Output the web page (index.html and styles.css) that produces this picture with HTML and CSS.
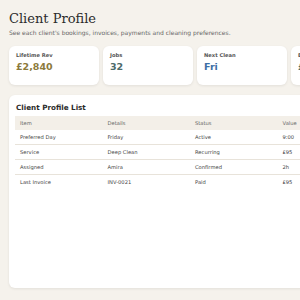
FILE: index.html
```html
<!DOCTYPE html>
<html lang="en">
<head>
    <meta charset="UTF-8">
    <meta name="viewport" content="width=device-width, initial-scale=1.0">
    <title>Client Profile</title>
    <link rel="stylesheet" href="styles.css">
</head>
<body>
    <div class="page">
        <header class="page-header">
            <h1>Client Profile</h1>
            <p class="subtitle">See each client's bookings, invoices, payments and cleaning preferences.</p>
        </header>

        <section class="stats">
            <div class="stat-card">
                <div class="stat-label">Lifetime Rev</div>
                <div class="stat-value gold">£2,840</div>
            </div>
            <div class="stat-card">
                <div class="stat-label">Jobs</div>
                <div class="stat-value slate">32</div>
            </div>
            <div class="stat-card">
                <div class="stat-label">Next Clean</div>
                <div class="stat-value blue">Fri</div>
            </div>
            <div class="stat-card">
                <div class="stat-label">Balance</div>
                <div class="stat-value slate">£0</div>
            </div>
        </section>

        <section class="panel">
            <h2>Client Profile List</h2>
            <table class="data-table">
                <thead>
                    <tr>
                        <th>Item</th>
                        <th>Details</th>
                        <th>Status</th>
                        <th>Value</th>
                    </tr>
                </thead>
                <tbody>
                    <tr>
                        <td>Preferred Day</td>
                        <td>Friday</td>
                        <td>Active</td>
                        <td>9:00</td>
                    </tr>
                    <tr>
                        <td>Service</td>
                        <td>Deep Clean</td>
                        <td>Recurring</td>
                        <td>£95</td>
                    </tr>
                    <tr>
                        <td>Assigned</td>
                        <td>Amira</td>
                        <td>Confirmed</td>
                        <td>2h</td>
                    </tr>
                    <tr>
                        <td>Last Invoice</td>
                        <td>INV-0021</td>
                        <td>Paid</td>
                        <td>£95</td>
                    </tr>
                </tbody>
            </table>
        </section>
    </div>
</body>
</html>
```

FILE: styles.css
```css
:root {
    --background: #f5f2ec;
    --card: #ffffff;
    --text: #2b2b2b;
    --muted: #666666;
    --border: #e8e3da;
    --header-bg: #f3efe8;
    --gold: #8c7a3c;
    --slate: #4d6b6b;
    --blue: #3d6fa6;
}

html, body {
    margin: 0;
    padding: 0;
    background-color: var(--background);
    color: var(--text);
    font-family: "DejaVu Sans", Verdana, sans-serif;
    overflow: hidden;
}

.page {
    width: 376px;
    padding: 10px 9px;
}

.page-header h1 {
    margin: 0;
    font-family: "DejaVu Serif", Georgia, serif;
    font-weight: normal;
    font-size: 13px;
    line-height: 18px;
}

.subtitle {
    margin: 1px 0 0;
    font-size: 6px;
    color: var(--muted);
}

.stats {
    display: grid;
    grid-template-columns: repeat(4, 90px);
    gap: 4px;
    margin-top: 10px;
}

.stat-card {
    background-color: var(--card);
    border-radius: 6px;
    box-shadow: 0 1px 3px rgba(0, 0, 0, 0.08);
    padding: 6px 7px;
    height: 27px;
}

.stat-label {
    font-size: 5.2px;
    font-weight: bold;
    color: #555555;
}

.stat-value {
    margin-top: 3px;
    font-size: 9.5px;
    font-weight: bold;
}

.gold { color: var(--gold); }
.slate { color: var(--slate); }
.blue { color: var(--blue); }

.panel {
    margin-top: 10px;
    background-color: var(--card);
    border-radius: 6px;
    box-shadow: 0 1px 3px rgba(0, 0, 0, 0.08);
    padding: 8px 6px 6px;
    height: 179px;
}

.panel h2 {
    margin: 0 0 4px 1px;
    font-size: 7.2px;
}

.data-table {
    width: 350px;
    border-collapse: collapse;
    table-layout: fixed;
}

.data-table th,
.data-table td {
    text-align: left;
    padding: 0 5px;
    height: 14px;
    font-size: 5.2px;
}

.data-table th {
    background-color: var(--header-bg);
    font-weight: normal;
    color: var(--muted);
    height: 14px;
}

.data-table td {
    color: #444444;
    border-bottom: 1px solid var(--border);
}

.data-table tr:last-child td {
    border-bottom: none;
}
```
